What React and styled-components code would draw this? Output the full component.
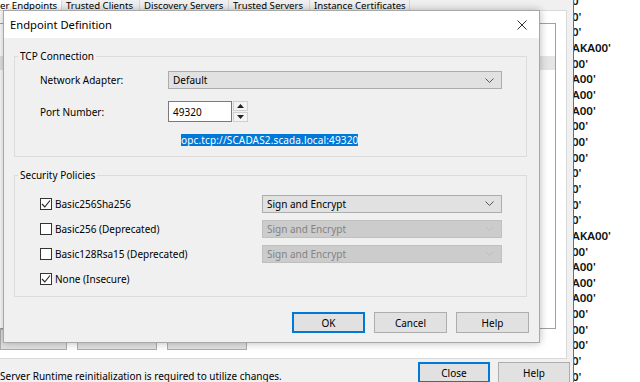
import React from 'react';
import styled, { createGlobalStyle } from 'styled-components';

const GlobalStyle = createGlobalStyle`
  html, body {
    margin: 0;
    padding: 0;
  }
  body {
    width: 640px;
    height: 382px;
    overflow: hidden;
    background: #f0f0f0;
    font-family: 'Noto Sans', 'Open Sans', sans-serif;
    font-size: 10px;
    color: #000;
  }
`;

const Screen = styled.div`
    position: relative;
    display: grid;
    grid-template-columns: 573px 1fr;
    width: 640px;
    height: 382px;
    overflow: hidden;
`;

// Background window
const BackWindow = styled.div`
    display: flex;
    flex-direction: column;
    height: 382px;
    background: #f0f0f0;
    overflow: hidden;
`;

const TabStrip = styled.div`
    display: flex;
    height: 10px;
    flex-shrink: 0;
`;

const Tab = styled.div`
    width: ${(props) => props.$w}px;
    height: 10px;
    box-sizing: border-box;
    line-height: 11px;
    font-size: 9.6px;
    padding-left: ${(props) => (props.$active ? '0' : '4px')};
    white-space: nowrap;
    border-right: 1px solid #d9d9d9;
    background: ${(props) => (props.$active ? '#ffffff' : '#f0f0f0')};
`;

const TabPage = styled.div`
    flex: 1;
    display: flex;
    flex-direction: column;
    margin-right: 6px;
    padding: 12px 10px 8px 0;
    background: #ffffff;
    border: 1px solid #d9d9d9;
    border-left: 0;
`;

const ListView = styled.div`
    height: 272px;
    border: 1px solid #a0a0a0;
    border-left: 0;
    background: #ffffff;
    padding-top: 32px;
`;

const ListRow = styled.div`
    height: 14px;
    background: #e5e5e5;
`;

const PageButtons = styled.div`
    display: flex;
    gap: 10px;
    margin-top: auto;
`;

const PageButton = styled.div`
    width: ${(props) => props.$w}px;
    height: 21px;
    box-sizing: border-box;
    background: #e1e1e1;
    border: 1px solid #adadad;
`;

const Footer = styled.div`
    display: flex;
    align-items: flex-start;
    height: 22px;
    flex-shrink: 0;
    padding: 3px 3px 0 0;
    gap: 8px;
`;

const StatusText = styled.div`
    flex: 1;
    min-width: 0;
    padding-top: 7px;
    line-height: 14px;
    white-space: nowrap;
`;

// Right side log column
const LogColumn = styled.div`
    background: #ffffff;
    border-left: 1px solid #6e6e6e;
    overflow: hidden;
`;

const LogList = styled.div`
    margin-top: -7px;
    margin-left: -2px;
`;

const LogLine = styled.div`
    height: 15.67px;
    line-height: 15.67px;
    font-size: 11.5px;
    font-weight: 600;
    white-space: nowrap;
    color: #111;
`;

// Dialog
const Dialog = styled.div`
    position: absolute;
    left: 3px;
    top: 10px;
    width: 537px;
    height: 333px;
    box-sizing: border-box;
    display: flex;
    flex-direction: column;
    background: #f0f0f0;
    border: 1px solid #a8a8a8;
    box-shadow: 0 0 8px rgba(0, 0, 0, 0.28);
`;

const TitleBar = styled.div`
    display: flex;
    align-items: center;
    justify-content: space-between;
    height: 27px;
    flex-shrink: 0;
    padding-left: 6px;
    background: #ffffff;
`;

const Title = styled.div`
    font-size: 11.2px;
    color: #000;
`;

const CloseBox = styled.div`
    display: flex;
    align-items: center;
    justify-content: center;
    width: 34px;
    height: 27px;
`;

const DialogBody = styled.div`
    flex: 1;
    display: flex;
    flex-direction: column;
    padding: 11px 12px 0 10px;
`;

const GroupBox = styled.fieldset`
    margin: ${(props) => (props.$first ? '0' : '11px 0 0 0')};
    padding: 0;
    min-width: 0;
    border: 1px solid #dcdcdc;
`;

const Legend = styled.legend`
    margin-left: 3px;
    padding: 0 2px;
    line-height: 14px;
    font-size: 10px;
`;

const TcpGrid = styled.div`
    display: grid;
    grid-template-columns: 128px 334px;
    grid-template-rows: 18px 21px 12px;
    row-gap: 12px;
    align-items: center;
    padding: 8px 0 10px 25px;
`;

const FieldLabel = styled.div`
    white-space: nowrap;
`;

const Select = styled.div`
    display: flex;
    align-items: center;
    justify-content: space-between;
    height: 18px;
    box-sizing: border-box;
    padding: 0 7px 0 4px;
    background: ${(props) => (props.$disabled ? '#cccccc' : '#e1e1e1')};
    border: 1px solid ${(props) => (props.$disabled ? '#bfbfbf' : '#adadad')};
    color: ${(props) => (props.$disabled ? '#838383' : '#000')};
    white-space: nowrap;
`;

const SpinBox = styled.div`
    display: flex;
    gap: 1px;
    height: 21px;
`;

const NumberInput = styled.div`
    display: flex;
    align-items: center;
    width: 64px;
    height: 21px;
    box-sizing: border-box;
    padding-left: 4px;
    background: #ffffff;
    border: 1px solid #7a7a7a;
`;

const Spinner = styled.div`
    display: flex;
    flex-direction: column;
    gap: 1px;
    width: 15px;
`;

const SpinButton = styled.div`
    flex: 1;
    display: flex;
    align-items: center;
    justify-content: center;
    background: #f4f4f4;
    border: 1px solid #d0d0d0;
`;

const UrlText = styled.span`
    justify-self: start;
    margin-left: 13px;
    line-height: 12px;
    letter-spacing: 0.14px;
    background: #0078d7;
    color: #ffffff;
    white-space: nowrap;
`;

const PolicyGrid = styled.div`
    display: grid;
    grid-template-columns: 222px 240px;
    grid-auto-rows: 25px;
    align-items: center;
    padding: 9px 0 5px 25px;
`;

const CheckRow = styled.div`
    display: flex;
    align-items: center;
    gap: 3px;
    white-space: nowrap;
`;

const Box = styled.div`
    display: flex;
    align-items: center;
    justify-content: center;
    width: 12px;
    height: 12px;
    box-sizing: border-box;
    background: #ffffff;
    border: 1px solid #333333;
`;

const ButtonBar = styled.div`
    display: flex;
    justify-content: flex-end;
    gap: 9px;
    margin: 15px -2px 0 0;
`;

const Button = styled.div`
    display: flex;
    align-items: center;
    justify-content: center;
    width: ${(props) => props.$w || 73}px;
    height: 21px;
    box-sizing: border-box;
    background: #e1e1e1;
    border: 1px solid ${(props) => (props.$default ? '#0078d7' : '#adadad')};
    box-shadow: ${(props) => (props.$default ? 'inset 0 0 0 1px #0078d7' : 'none')};
    flex-shrink: 0;
`;

const Chevron = ({ color }) => (
    <svg width="9" height="5" viewBox="0 0 9 5">
        <polyline points="0.5,0.5 4.5,4.5 8.5,0.5" fill="none" stroke={color} strokeWidth="1" />
    </svg>
);

const Check = () => (
    <svg width="10" height="10" viewBox="0 0 10 10">
        <polyline points="1,5 3.8,8 9,1.5" fill="none" stroke="#222" strokeWidth="1.1" />
    </svg>
);

const Triangle = ({ up }) => (
    <svg width="7" height="4" viewBox="0 0 7 4">
        <polygon points={up ? '0,4 7,4 3.5,0' : '0,0 7,0 3.5,4'} fill="#222" />
    </svg>
);

const tabs = [
    { label: 'er Endpoints', w: 62, active: true },
    { label: 'Trusted Clients', w: 78 },
    { label: 'Discovery Servers', w: 89 },
    { label: 'Trusted Servers', w: 81 },
    { label: 'Instance Certificates', w: 100 },
];

const policies = [
    { name: 'Basic256Sha256', checked: true, mode: 'Sign and Encrypt', disabled: false },
    { name: 'Basic256 (Deprecated)', checked: false, mode: 'Sign and Encrypt', disabled: true },
    { name: 'Basic128Rsa15 (Deprecated)', checked: false, mode: 'Sign and Encrypt', disabled: true },
    { name: 'None (Insecure)', checked: true },
];

const logPattern = ["0'", "0'", "AKA00'", "00'", "A00'", "A00'", "A00'", "00'", "00'", "00'", "0'", "0'"];
const logLines = ["0'", ...logPattern, ...logPattern];

export default function App() {
    return (
        <>
            <GlobalStyle />
            <Screen>
                <BackWindow>
                    <TabStrip>
                        {tabs.map((t) => (
                            <Tab key={t.label} $w={t.w} $active={t.active}>{t.label}</Tab>
                        ))}
                    </TabStrip>
                    <TabPage>
                        <ListView>
                            <ListRow />
                        </ListView>
                        <PageButtons>
                            <PageButton $w={67} />
                            <PageButton $w={80} />
                            <PageButton $w={80} />
                        </PageButtons>
                    </TabPage>
                    <Footer>
                        <StatusText>Server Runtime reinitialization is required to utilize changes.</StatusText>
                        <Button $default $w={72}>Close</Button>
                        <Button $w={72}>Help</Button>
                    </Footer>
                </BackWindow>

                <LogColumn>
                    <LogList>
                        {logLines.map((line, i) => (
                            <LogLine key={i}>{line}</LogLine>
                        ))}
                    </LogList>
                </LogColumn>

                <Dialog>
                    <TitleBar>
                        <Title>Endpoint Definition</Title>
                        <CloseBox>
                            <svg width="10" height="10" viewBox="0 0 10 10">
                                <path d="M0.5 0.5 L9.5 9.5 M9.5 0.5 L0.5 9.5" stroke="#333" strokeWidth="1" />
                            </svg>
                        </CloseBox>
                    </TitleBar>
                    <DialogBody>
                        <GroupBox $first>
                            <Legend>TCP Connection</Legend>
                            <TcpGrid>
                                <FieldLabel>Network Adapter:</FieldLabel>
                                <Select>
                                    Default
                                    <Chevron color="#555" />
                                </Select>
                                <FieldLabel>Port Number:</FieldLabel>
                                <SpinBox>
                                    <NumberInput>49320</NumberInput>
                                    <Spinner>
                                        <SpinButton><Triangle up /></SpinButton>
                                        <SpinButton><Triangle /></SpinButton>
                                    </Spinner>
                                </SpinBox>
                                <span />
                                <UrlText>opc.tcp://SCADAS2.scada.local:49320</UrlText>
                            </TcpGrid>
                        </GroupBox>

                        <GroupBox>
                            <Legend>Security Policies</Legend>
                            <PolicyGrid>
                                {policies.map((p) => (
                                    <React.Fragment key={p.name}>
                                        <CheckRow>
                                            <Box>{p.checked && <Check />}</Box>
                                            {p.name}
                                        </CheckRow>
                                        {p.mode ? (
                                            <Select $disabled={p.disabled}>
                                                {p.mode}
                                                <Chevron color={p.disabled ? '#bdbdbd' : '#555'} />
                                            </Select>
                                        ) : (
                                            <span />
                                        )}
                                    </React.Fragment>
                                ))}
                            </PolicyGrid>
                        </GroupBox>

                        <ButtonBar>
                            <Button $default>OK</Button>
                            <Button>Cancel</Button>
                            <Button>Help</Button>
                        </ButtonBar>
                    </DialogBody>
                </Dialog>
            </Screen>
        </>
    );
}
